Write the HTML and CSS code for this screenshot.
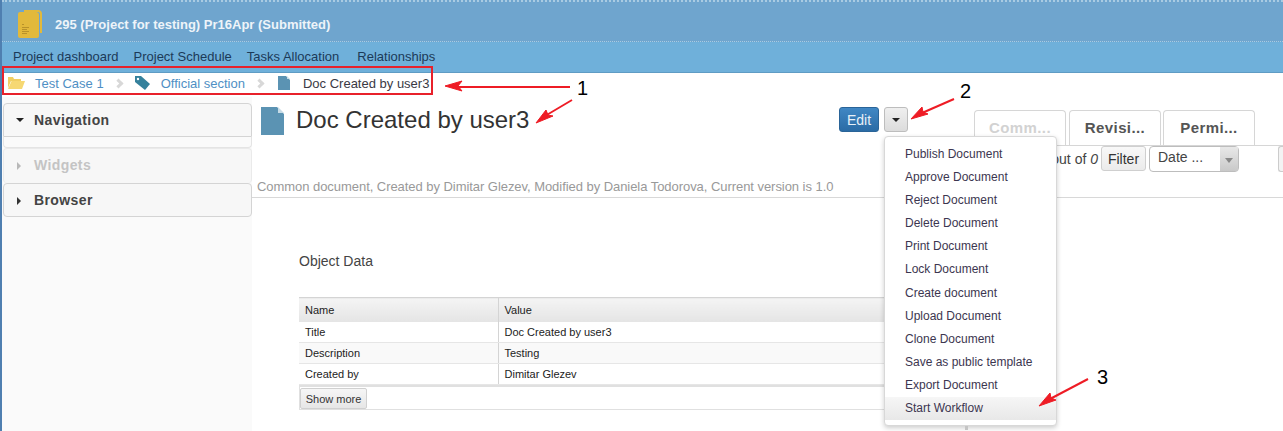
FILE: index.html
```html
<!DOCTYPE html>
<html lang="en">
<head>
  <meta charset="UTF-8">
  <title>Doc Created by user3</title>
  <link rel="stylesheet" href="styles.css">
</head>
<body>
  <!-- Project header -->
  <div class="project-bar">
    <svg class="project-icon" width="28" height="30" viewBox="0 0 28 30">
      <path d="M7 1h14a4 4 0 0 1 4 4v19h-2V5a2 2 0 0 0-2-2H7z" fill="#e2b93b"/>
      <path d="M3 3h16a3 3 0 0 1 3 3v21a2 2 0 0 1-2 2H3a2 2 0 0 1-2-2V5a2 2 0 0 1 2-2z" fill="#e2b93b"/>
      <path d="M5 15h2v1H5zM5 18h7v1H5zM5 20h5v1H5zM5 22h7v1H5zM5 24h5v1H5z" fill="#b8922a"/>
    </svg>
    <span class="project-title">295 (Project for testing) Pr16Apr (Submitted)</span>
  </div>
  <div class="project-nav">
    <a>Project dashboard</a>
    <a>Project Schedule</a>
    <a>Tasks Allocation</a>
    <a>Relationships</a>
  </div>

  <!-- Breadcrumb -->
  <div class="breadcrumb">
    <svg class="crumb-folder" width="17" height="12" viewBox="0 0 17 12">
      <path d="M0 2V0h5l1 2h7v2H3L0 11z" fill="#f1cf63"/>
      <path d="M3.5 4H17l-3 8H0z" fill="#f6d873"/>
    </svg>
    <a class="crumb-link crumb-first">Test Case 1</a>
    <span class="crumb-sep"></span>
    <svg class="crumb-tag" width="15" height="14" viewBox="0 0 15 14">
      <path d="M0 0h6l9 8-5 6-10-8z" fill="#35819c"/>
      <circle cx="3" cy="3" r="1.2" fill="#fff"/>
    </svg>
    <a class="crumb-link crumb-second">Official section</a>
    <span class="crumb-sep"></span>
    <svg class="crumb-doc" width="12" height="14" viewBox="0 0 12 14">
      <path d="M0 0h8l4 4v10H0z" fill="#5b93b3"/>
      <path d="M9 0l3 3H9z" fill="#c6dbe6"/>
    </svg>
    <span class="crumb-current">Doc Created by user3</span>
  </div>

  <div class="page">
    <!-- Left panels -->
    <aside class="sidebar">
      <div class="panel panel-open"><span class="caret-down"></span>Navigation</div>
      <div class="panel-foot"></div>
      <div class="panel panel-disabled"><span class="caret-right"></span>Widgets</div>
      <div class="panel"><span class="caret-right"></span>Browser</div>
    </aside>

    <main class="content">
      <div class="doc-head">
        <svg class="doc-icon" width="23" height="28" viewBox="0 0 23 28">
          <path d="M0 0h16l7 7v21H0z" fill="#5b93b3"/>
          <path d="M17 0l6 6h-6z" fill="#c6dbe6"/>
        </svg>
        <h1 class="doc-title">Doc Created by user3</h1>
        <button class="btn-edit">Edit</button>
        <button class="btn-more"><span class="caret-down"></span></button>
        <div class="tabs">
          <div class="tab tab-disabled">Comm...</div>
          <div class="tab">Revisi...</div>
          <div class="tab">Permi...</div>
        </div>
      </div>

      <div class="doc-tools">
        <span class="count">out of <i>0</i></span>
        <button class="btn-filter">Filter</button>
        <div class="select"><span class="select-text">Date ...</span><span class="select-arrow"></span></div>
        <div class="stub"></div>
      </div>

      <p class="doc-meta">Common document, Created by Dimitar Glezev, Modified by Daniela Todorova, Current version is 1.0</p>

      <section class="object-data">
        <h2>Object Data</h2>
        <table class="data-table">
          <tr><th class="col-name">Name</th><th>Value</th></tr>
          <tr><td>Title</td><td>Doc Created by user3</td></tr>
          <tr class="row-alt"><td>Description</td><td>Testing</td></tr>
          <tr><td>Created by</td><td>Dimitar Glezev</td></tr>
        </table>
        <div class="table-foot"><button class="btn-show">Show more</button></div>
      </section>
    </main>
  </div>

  <!-- Actions menu -->
  <ul class="menu">
    <li>Publish Document</li>
    <li>Approve Document</li>
    <li>Reject Document</li>
    <li>Delete Document</li>
    <li>Print Document</li>
    <li>Lock Document</li>
    <li>Create document</li>
    <li>Upload Document</li>
    <li>Clone Document</li>
    <li>Save as public template</li>
    <li>Export Document</li>
    <li class="menu-active">Start Workflow</li>
  </ul>
  <span class="grip"></span>

  <!-- Screenshot annotations -->
  <svg class="notes" width="1283" height="431" viewBox="0 0 1283 431">
    <rect x="3" y="67" width="429" height="27" fill="none" stroke="#e8212b" stroke-width="2"/>
    <g fill="#ee1c25" stroke="#ee1c25">
      <path d="M570 87H458" stroke-width="2" fill="none"/>
      <path d="M445 86l17-5-4 5 4 5z" stroke-width="1"/>
      <path d="M572 100l-27 16" stroke-width="2" fill="none"/>
      <path d="M536 123l10-13 2 5 5 1z" stroke-width="1"/>
      <path d="M954 99l-32 14" stroke-width="2" fill="none"/>
      <path d="M911 119l11-12 1 5 5 2z" stroke-width="1"/>
      <path d="M1088 379l-38 20" stroke-width="2" fill="none"/>
      <path d="M1039 406l11-13 1 5 5 2z" stroke-width="1"/>
    </g>
    <g class="note-num">
      <text x="577" y="95">1</text>
      <text x="960" y="98">2</text>
      <text x="1097" y="384">3</text>
    </g>
  </svg>
</body>
</html>
```

FILE: styles.css
```css
* {
  margin: 0;
  padding: 0;
  box-sizing: border-box;
}

body {
  position: relative;
  height: 431px;
  overflow: hidden;
  font-family: "Liberation Sans", Arial, sans-serif;
  font-size: 12px;
  color: #333;
  background: #fff;
  border-left: 2px solid #4f7fb0;
}

/* Project header */
.project-bar {
  display: flex;
  align-items: center;
  height: 42px;
  padding: 5px 0 0 15px;
  background: #6fa5ce;
  border-top: 2px dotted #a9cbe2;
  border-bottom: 1px dotted #a9cbe2;
}

.project-icon {
  margin-right: 10px;
}

.project-title {
  font-size: 13px;
  font-weight: bold;
  color: #eef4f9;
}

.project-nav {
  display: flex;
  gap: 15px;
  height: 31px;
  padding: 7px 0 0 11px;
  font-size: 13px;
  line-height: 16px;
  background: #6fb0da;
  border-bottom: 1px solid #5f9cc4;
}

.project-nav a {
  color: #1c3a58;
}

.project-nav a:last-child {
  margin-left: 3px;
}

/* Breadcrumb */
.breadcrumb {
  display: flex;
  align-items: center;
  height: 24px;
  padding: 0 0 4px 6px;
  font-size: 13px;
}

.crumb-link {
  color: #4f8fc4;
}

.crumb-first {
  margin-left: 10px;
}

.crumb-second {
  margin-left: 11px;
}

.crumb-sep {
  width: 7px;
  height: 7px;
  margin: 0 11px 0 11px;
  border-top: 3px solid #d8d8d8;
  border-right: 3px solid #d8d8d8;
  transform: rotate(45deg);
}

.crumb-tag {
  margin-left: 2px;
}

.crumb-doc {
  margin-left: 4px;
}

.crumb-current {
  margin-left: 13px;
  color: #3a3a44;
}

/* Page columns */
.page {
  display: flex;
  height: 334px;
}

.sidebar {
  flex: none;
  width: 250px;
  padding: 6px 0 0 1px;
  background: #fafafa;
}

.panel {
  height: 34px;
  padding-left: 30px;
  font-size: 14px;
  font-weight: bold;
  line-height: 33px;
  letter-spacing: 0.4px;
  color: #444;
  background: #f7f7f7;
  border: 1px solid #d4d4d4;
  border-radius: 4px;
  position: relative;
}

.panel-open {
  border-radius: 4px 4px 0 0;
}

.panel-foot {
  height: 11px;
  border: 1px solid #e4e4e4;
  border-top: none;
  border-radius: 0 0 4px 4px;
}

.panel-disabled {
  height: 35px;
  color: #c4c4c4;
  border-color: #eaeaea;
  border-bottom: none;
}

.panel-disabled .caret-right {
  border-left-color: #b8b8b8;
}

.caret-down,
.caret-right {
  display: inline-block;
  width: 0;
  height: 0;
}

.caret-down {
  border-top: 4px solid #222;
  border-left: 4px solid transparent;
  border-right: 4px solid transparent;
}

.panel .caret-down,
.panel .caret-right {
  position: absolute;
  top: 14px;
  left: 12px;
}

.panel .caret-right {
  top: 13px;
  left: 13px;
}

.caret-right {
  border-left: 4px solid #333;
  border-top: 4px solid transparent;
  border-bottom: 4px solid transparent;
}

/* Document area */
.content {
  flex: 1;
  min-width: 0;
}

.doc-head {
  display: flex;
  align-items: flex-start;
  height: 49px;
  padding: 10px 0 0 9px;
}

.doc-icon {
  flex: none;
}

.doc-title {
  width: 543px;
  margin-left: 12px;
  font-size: 24px;
  font-weight: normal;
  line-height: 26px;
  color: #333;
}

.btn-edit {
  width: 40px;
  height: 25px;
  font: 14px "Liberation Sans", Arial, sans-serif;
  color: #e8f1f8;
  background: linear-gradient(#4087c4, #2a6ba5);
  border: 1px solid #2a6498;
  border-radius: 3px;
}

.btn-more {
  width: 24px;
  height: 25px;
  margin-left: 5px;
  background: linear-gradient(#efefef, #dcdcdc);
  border: 1px solid #bdbdbd;
  border-radius: 3px;
}

.btn-more .caret-down {
  vertical-align: middle;
}

.tabs {
  flex: 1;
  display: flex;
  gap: 3px;
  height: 39px;
  margin-left: 66px;
  padding-top: 3px;
  border-bottom: 1px solid #d6d6d6;
}

.tab {
  width: 92px;
  height: 35px;
  font-size: 15px;
  font-weight: bold;
  line-height: 33px;
  letter-spacing: 0.4px;
  text-align: center;
  color: #555;
  background: #fff;
  border: 1px solid #d6d6d6;
  border-bottom: none;
  border-radius: 4px 4px 0 0;
}

.tab:last-child {
  margin-left: -1px;
}

.tab-disabled {
  color: #d2d2d2;
}

.doc-tools {
  display: flex;
  align-items: flex-start;
  height: 30px;
  padding-left: 792px;
}

.doc-tools > * {
  flex: none;
}

.count {
  width: 57px;
  padding-right: 3px;
  margin-top: 5px;
  font-size: 14px;
  text-align: right;
  white-space: nowrap;
  color: #444;
}

.btn-filter {
  width: 45px;
  height: 25px;
  font: 14px "Liberation Sans", Arial, sans-serif;
  color: #333;
  background: linear-gradient(#f8f8f8, #ebebeb);
  border: 1px solid #cfcfcf;
  border-radius: 3px;
}

.select {
  display: flex;
  width: 90px;
  height: 26px;
  margin-left: 3px;
  font-size: 14px;
  color: #444;
  background: #fff;
  border: 1px solid #bdbdbd;
  border-radius: 4px;
}

.select-text {
  flex: 1;
  padding: 2px 0 0 8px;
}

.select-arrow {
  width: 18px;
  background: linear-gradient(#e8e8e8, #c9c9c9);
  position: relative;
}

.select-arrow::after {
  content: "";
  position: absolute;
  top: 11px;
  left: 5px;
  border-top: 5px solid #888;
  border-left: 4px solid transparent;
  border-right: 4px solid transparent;
}

.stub {
  width: 8px;
  height: 26px;
  margin-left: 39px;
  background: #f3f3f3;
  border: 1px solid #ccc;
  border-right: none;
  border-radius: 3px 0 0 3px;
}

.doc-meta {
  height: 22px;
  padding: 4px 0 0 5px;
  font-size: 13px;
  line-height: 14px;
  letter-spacing: -0.05px;
  color: #999;
  white-space: nowrap;
  border-bottom: 1px solid #d8d8d8;
}

.object-data {
  padding: 55px 0 0 47px;
}

.object-data h2 {
  margin-bottom: 28px;
  font-size: 14px;
  font-weight: normal;
  line-height: 16px;
  color: #444;
}

.data-table {
  width: 600px;
  font-size: 11px;
  color: #222;
  border-collapse: collapse;
  border-top: 1px solid #d4d4d4;
}

.data-table th {
  height: 24px;
  padding-left: 6px;
  font-weight: normal;
  text-align: left;
  background: linear-gradient(#f4f4f4, #e4e4e4);
}

.data-table td {
  height: 21px;
  padding-left: 6px;
  border-bottom: 1px solid #e6e6e6;
}

.data-table th:first-child,
.data-table td:first-child {
  width: 199px;
  border-right: 1px solid #d4d4d4;
}

.row-alt td {
  background: #f9f9f9;
}

.table-foot {
  width: 600px;
  height: 25px;
  padding-top: 1px;
  border-top: 2px solid #e0e0e0;
  border-bottom: 1px solid #e0e0e0;
  border-left: 1px solid #e0e0e0;
}

.btn-show {
  display: block;
  width: 67px;
  height: 21px;
  font: 11px "Liberation Sans", Arial, sans-serif;
  color: #333;
  white-space: nowrap;
  background: linear-gradient(#f6f6f6, #e6e6e6);
  border: 1px solid #d0d0d0;
  border-radius: 2px;
}

/* Dropdown */
.menu {
  position: absolute;
  top: 136px;
  left: 882px;
  width: 173px;
  padding: 6px 0 5px;
  list-style: none;
  font-size: 12px;
  color: #3c3650;
  background: #fff;
  border: 1px solid #d8d8d8;
  border-radius: 4px;
  box-shadow: 0 2px 5px rgba(0, 0, 0, 0.2);
}

.menu li {
  height: 23.1px;
  padding-left: 20px;
  line-height: 23px;
}

.menu .menu-active {
  background: linear-gradient(#f6f6f6, #e8e8e8);
}

.grip {
  position: absolute;
  top: 426px;
  left: 963px;
  width: 3px;
  height: 4px;
  background: #c4c4c4;
}

/* Annotations */
.notes {
  position: absolute;
  top: 0;
  left: -2px;
  pointer-events: none;
}

.note-num {
  font-family: "Liberation Sans", Arial, sans-serif;
  font-size: 20px;
  fill: #000;
}
```
